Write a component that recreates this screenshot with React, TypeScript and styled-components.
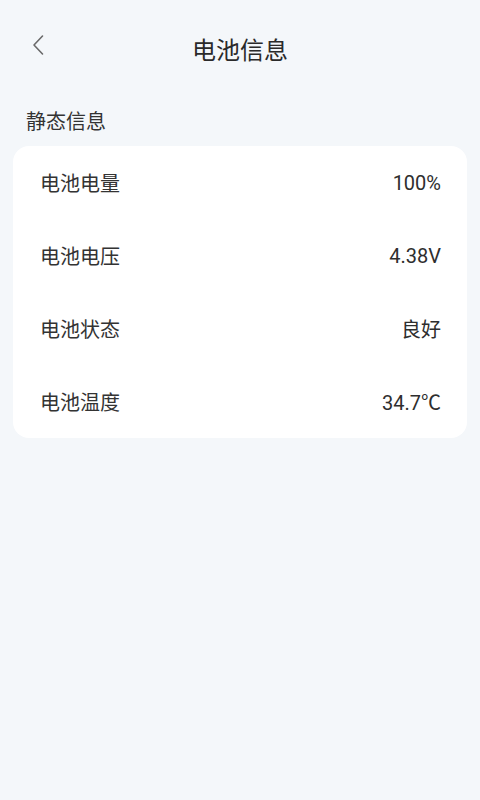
import React from 'react';
import styled, { createGlobalStyle } from 'styled-components';

const GlobalStyle = createGlobalStyle`
    html, body {
        margin: 0;
        padding: 0;
        background: #f4f7fa;
    }
    body {
        font-family: "Noto Sans CJK SC", "Noto Sans", Roboto, sans-serif;
        color: #333;
    }
`;

const Page = styled.div`
    min-height: 800px;
    background: #f4f7fa;
    padding: 0 13px;
    box-sizing: border-box;
`;

const Header = styled.div`
    height: 98px;
    display: flex;
    align-items: center;
    justify-content: center;
    position: relative;
`;

const BackButton = styled.button`
    position: absolute;
    left: 17px;
    top: 33px;
    width: 16px;
    height: 24px;
    padding: 0;
    border: none;
    background: none;
    display: flex;
    align-items: center;
    justify-content: center;
`;

const Title = styled.h1`
    margin: 0;
    margin-top: -2px;
    font-size: 24px;
    font-weight: 400;
    color: #2a2a2a;
`;

const SectionTitle = styled.div`
    padding-left: 13px;
    height: 48px;
    font-size: 20px;
    line-height: 45px;
    color: #333;
`;

const Card = styled.div`
    background: #fff;
    border-radius: 16px;
`;

const Row = styled.div`
    height: 73px;
    display: flex;
    align-items: center;
    justify-content: space-between;
    padding: 0 26px 0 27px;
    font-size: 20px;
    color: #333;
`;

const Value = styled.span`
    font-family: Roboto, "Noto Sans CJK SC", sans-serif;
    font-size: 20px;
    color: #2e2e2e;
`;

const rows = [
    { label: '电池电量', value: '100%' },
    { label: '电池电压', value: '4.38V' },
    { label: '电池状态', value: '良好' },
    { label: '电池温度', value: '34.7℃' },
];

export default function App() {
    return (
        <Page>
            <GlobalStyle />
            <Header>
                <BackButton aria-label="返回">
                    <svg width="14" height="22" viewBox="0 0 14 22" fill="none">
                        <path d="M11.5 2 L3 11 L11.5 20" stroke="#6a6a6a" strokeWidth="1.6" strokeLinecap="round" strokeLinejoin="round" />
                    </svg>
                </BackButton>
                <Title>电池信息</Title>
            </Header>
            <SectionTitle>静态信息</SectionTitle>
            <Card>
                {rows.map(r => (
                    <Row key={r.label}>
                        <span>{r.label}</span>
                        <Value>{r.value}</Value>
                    </Row>
                ))}
            </Card>
        </Page>
    );
}
